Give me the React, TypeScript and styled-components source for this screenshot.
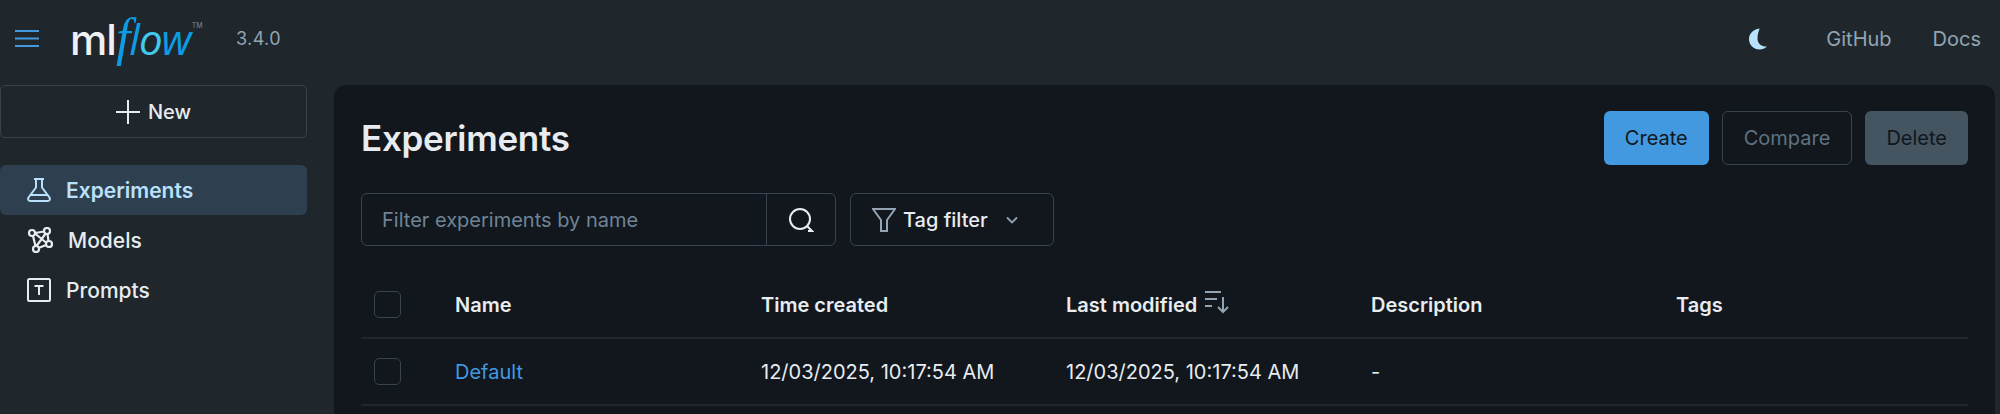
import React from "react";
import styled, { createGlobalStyle } from "styled-components";

const GlobalStyle = createGlobalStyle`
  html, body {
    margin: 0;
    padding: 0;
    height: 100%;
    overflow: hidden;
    background: #1f272d;
    color: #e8ecf0;
    font-family: Inter, "Liberation Sans", sans-serif;
  }
`;

const Page = styled.div`
  display: flex;
  flex-direction: column;
  height: 414px;
  overflow: hidden;
`;

const TopBar = styled.header`
  display: flex;
  align-items: center;
  height: 85px;
  flex: none;
  padding: 0 19px 8px 15px;
  box-sizing: border-box;
`;

const Brand = styled.div`
  display: flex;
  align-items: center;
  margin-right: auto;
`;

const MenuButton = styled.span`
  display: flex;
  color: #4299e0;
  margin-right: 31px;
`;

const Logo = styled.span`
  display: flex;
  align-items: baseline;
  width: 166px;
  font-size: 42px;
  line-height: 50px;
`;

const LogoMl = styled.span`
  font-family: Inter, sans-serif;
  font-weight: 500;
  color: #eef0f3;
  letter-spacing: -1px;
`;

const LogoFlow = styled.span`
  font-family: "Open Sans", sans-serif;
  font-style: italic;
  font-weight: 500;
  color: #0d9ce4;
  letter-spacing: -1px;
`;

const LogoF = styled.span`
  font-family: "Liberation Serif", serif;
  font-style: italic;
  font-size: 52px;
`;

const LogoO = styled.span`
  color: #43c9ed;
`;

const LogoTm = styled.sup`
  font-size: 7px;
  line-height: 0;
  color: #7d8b97;
  align-self: flex-start;
  margin: 13px 0 0 1px;
`;

const Version = styled.span`
  font-size: 18px;
  letter-spacing: 0.4px;
  color: #92a4b3;
`;

const TopLink = styled.a`
  font-size: 20px;
  color: #92a4b3;
  margin-left: 41px;
`;

const MoonIcon = styled.span`
  display: flex;
  color: #bae1fc;
  margin-right: 17px;
`;

const Body = styled.div`
  display: flex;
  flex: 1;
  min-height: 0;
`;

const Sidebar = styled.nav`
  flex: none;
  width: 334px;
  box-sizing: border-box;
  padding-right: 27px;
`;

const NewButton = styled.div`
  display: flex;
  align-items: center;
  justify-content: center;
  gap: 8px;
  height: 53px;
  box-sizing: border-box;
  border: 1.5px solid #37444f;
  border-radius: 5px;
  font-size: 20px;
  font-weight: 500;
  color: #e8ecf0;
  margin-bottom: 27px;
`;

const NavItem = styled.div<{ $active?: boolean }>`
  display: flex;
  align-items: center;
  gap: 15px;
  height: 50px;
  padding-left: 27px;
  border-radius: 6px;
  font-size: 21px;
  font-weight: ${(p) => (p.$active ? 600 : 500)};
  color: ${(p) => (p.$active ? "#bae1fc" : "#e8ecf0")};
  background: ${(p) => (p.$active ? "#2e404f" : "transparent")};
`;

const Panel = styled.main`
  flex: 1;
  margin-right: 5px;
  padding: 26px 27px 0;
  background: #11171c;
  border-radius: 12px 12px 0 0;
`;

const TitleRow = styled.div`
  display: flex;
  align-items: center;
  justify-content: space-between;
  height: 54px;
  margin-bottom: 28px;
`;

const Title = styled.h1`
  margin: 0;
  font-size: 35px;
  font-weight: 600;
  letter-spacing: -0.3px;
  color: #e8ecf0;
`;

const Actions = styled.div`
  display: flex;
  gap: 13px;
`;

const ActionButton = styled.div<{ $kind: "primary" | "outline" | "muted" }>`
  display: flex;
  align-items: center;
  height: 54px;
  box-sizing: border-box;
  padding: 0 21px;
  border-radius: 6px;
  font-size: 20px;
  border: ${(p) => (p.$kind === "outline" ? "1.5px solid #37444f" : "none")};
  background: ${(p) =>
    p.$kind === "primary" ? "#4299e0" : p.$kind === "muted" ? "#445461" : "transparent"};
  color: ${(p) => (p.$kind === "outline" ? "#5f7281" : "#11171c")};
`;

const Filters = styled.div`
  display: flex;
  gap: 14px;
  height: 53px;
  margin-bottom: 22px;
`;

const SearchBox = styled.div`
  display: flex;
  width: 475px;
  box-sizing: border-box;
  border: 1.5px solid #37444f;
  border-radius: 6px;
`;

const SearchText = styled.span`
  flex: 1;
  display: flex;
  align-items: center;
  padding-left: 20px;
  font-size: 20px;
  color: #6f8497;
`;

const SearchButton = styled.span`
  display: flex;
  align-items: center;
  justify-content: center;
  width: 68px;
  color: #e8ecf0;
  border-left: 1.5px solid #37444f;
`;

const TagFilter = styled.div`
  display: flex;
  align-items: center;
  width: 204px;
  box-sizing: border-box;
  padding-left: 21px;
  border: 1.5px solid #37444f;
  border-radius: 6px;
  font-size: 20px;
  font-weight: 500;
  color: #e8ecf0;
`;

const FilterIcon = styled.span`
  display: flex;
  color: #92a4b3;
  margin-right: 7px;
`;

const Chevron = styled.span`
  display: flex;
  color: #92a4b3;
  margin-left: 17px;
`;

const Row = styled.div<{ $head?: boolean }>`
  display: grid;
  grid-template-columns: 94px 306px 305px 305px 305px 292px;
  align-items: center;
  height: ${(p) => (p.$head ? "71px" : "67px")};
  padding-top: ${(p) => (p.$head ? "4px" : "0")};
  box-sizing: border-box;
  border-bottom: 2px solid #1f272d;
  font-size: 20px;
  font-weight: ${(p) => (p.$head ? 600 : 400)};
  color: #e8ecf0;
`;

const Check = styled.span`
  display: block;
  width: 27px;
  height: 27px;
  margin-left: 13px;
  box-sizing: border-box;
  border: 1.5px solid #37444f;
  border-radius: 5px;
`;

const NameLink = styled.a`
  color: #4299e0;
`;

const SortCell = styled.span`
  display: flex;
  align-items: center;
  gap: 7px;
`;

const SortIcon = styled.span`
  display: flex;
  color: #92a4b3;
  margin-top: -6px;
`;

const App: React.FunctionComponent = () => {
  return (
    <Page>
      <GlobalStyle />
      <TopBar>
        <Brand>
          <MenuButton>
            <svg width="24" height="19" viewBox="0 0 24 19" fill="none" stroke="currentColor" strokeWidth="2">
              <path d="M0 2h24M0 9.5h24M0 17h24" />
            </svg>
          </MenuButton>
          <Logo>
            <LogoMl>ml</LogoMl>
            <LogoFlow>
              <LogoF>f</LogoF>l<LogoO>o</LogoO>w
            </LogoFlow>
            <LogoTm>TM</LogoTm>
          </Logo>
          <Version>3.4.0</Version>
        </Brand>
        <MoonIcon>
          <svg width="20" height="22" viewBox="0 0 20 22" fill="currentColor">
            <path d="M12 0.5C6 1 1 5 1 11c0 6 4.7 10.500 10.500 10.500 3 0 5.500-1 7.500-3-5 .5-9.500-2.500-9.500-8 0-4 1-7.500 2.500-10.500z" />
          </svg>
        </MoonIcon>
        <TopLink>GitHub</TopLink>
        <TopLink>Docs</TopLink>
      </TopBar>
      <Body>
        <Sidebar>
          <NewButton>
            <svg width="24" height="24" viewBox="0 0 24 24" fill="none" stroke="currentColor" strokeWidth="2">
              <path d="M12 0v24M0 12h24" />
            </svg>
            New
          </NewButton>
          <NavItem $active>
            <svg width="24" height="24" viewBox="0 0 24 24" fill="none" stroke="currentColor" strokeWidth="2">
              <path d="M7 1h10M9 1v8.500L1.500 19.500c-1 2 0 3.500 2 3.500h17c2 0 3-1.500 2-3.500L15 9.500V1M4 17h16" />
            </svg>
            Experiments
          </NavItem>
          <NavItem>
            <svg width="26" height="26" viewBox="0 0 26 26" fill="none" stroke="currentColor" strokeWidth="2.200">
              <circle cx="5" cy="6" r="3" />
              <circle cx="20" cy="4" r="3" />
              <circle cx="22" cy="17" r="3" />
              <circle cx="9" cy="22" r="3" />
              <path d="M8 6.500 19 15.500M8 6l9-1.500M20.500 7l1 7M19 18l-7.500 3M6 9l2.500 10M9.500 19 19 6" />
            </svg>
            Models
          </NavItem>
          <NavItem>
            <svg width="24" height="24" viewBox="0 0 24 24" fill="none" stroke="currentColor" strokeWidth="2">
              <rect x="1" y="1" width="22" height="22" rx="1.500" />
              <path d="M7.500 8h9M12 8v9" />
            </svg>
            Prompts
          </NavItem>
        </Sidebar>
        <Panel>
          <TitleRow>
            <Title>Experiments</Title>
            <Actions>
              <ActionButton $kind="primary">Create</ActionButton>
              <ActionButton $kind="outline">Compare</ActionButton>
              <ActionButton $kind="muted">Delete</ActionButton>
            </Actions>
          </TitleRow>
          <Filters>
            <SearchBox>
              <SearchText>Filter experiments by name</SearchText>
              <SearchButton>
                <svg width="26" height="26" viewBox="0 0 26 26" fill="none" stroke="currentColor" strokeWidth="2">
                  <circle cx="12" cy="12" r="10" />
                  <path d="M19 19l5 5h-4" />
                </svg>
              </SearchButton>
            </SearchBox>
            <TagFilter>
              <FilterIcon>
                <svg width="24" height="24" viewBox="0 0 24 24" fill="none" stroke="currentColor" strokeWidth="2">
                  <path d="M1 1h22l-8 11v11H9V12L1 1z" />
                </svg>
              </FilterIcon>
              Tag filter
              <Chevron>
                <svg width="14" height="14" viewBox="0 0 14 14" fill="none" stroke="currentColor" strokeWidth="1.800">
                  <path d="M2 4.500l5 5 5-5" />
                </svg>
              </Chevron>
            </TagFilter>
          </Filters>
          <Row $head>
            <Check />
            <span>Name</span>
            <span>Time created</span>
            <SortCell>
              Last modified
              <SortIcon>
                <svg width="26" height="24" viewBox="0 0 26 24" fill="none" stroke="currentColor" strokeWidth="2">
                  <path d="M1 2h16M1 9h12M1 16h7M19 7v15M14 17l5 5 5-5" />
                </svg>
              </SortIcon>
            </SortCell>
            <span>Description</span>
            <span>Tags</span>
          </Row>
          <Row>
            <Check />
            <NameLink>Default</NameLink>
            <span>12/03/2025, 10:17:54 AM</span>
            <span>12/03/2025, 10:17:54 AM</span>
            <span>-</span>
            <span />
          </Row>
        </Panel>
      </Body>
    </Page>
  );
};

export default App;
